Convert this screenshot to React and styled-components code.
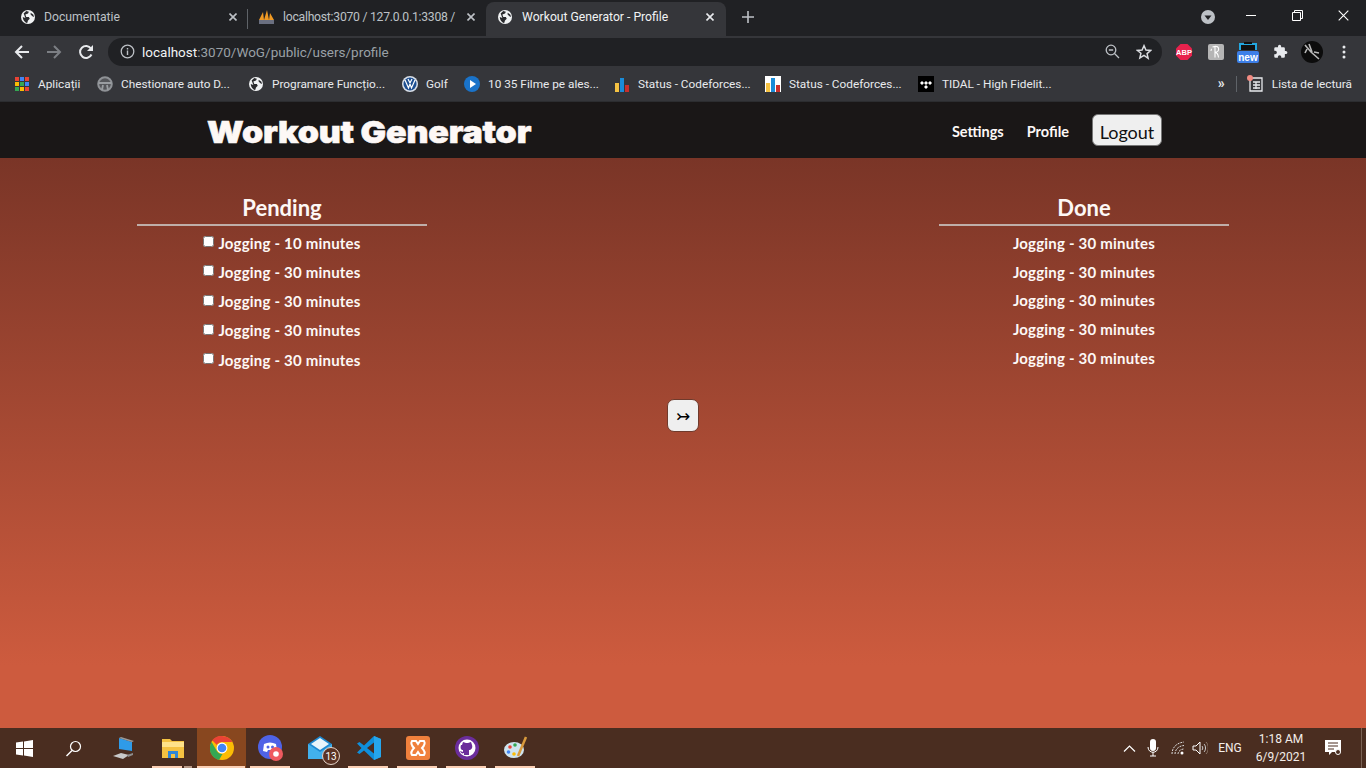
import React from "react";
import styled, { createGlobalStyle } from "styled-components";

const Global = createGlobalStyle`
  html, body { margin: 0; padding: 0; background: #fff; }
  #root { width: 1366px; height: 768px; overflow: hidden; }
  * { box-sizing: border-box; }
`;

const Screen = styled.div`
  width: 1366px; height: 768px; display: flex; flex-direction: column;
  font-family: Roboto, "Liberation Sans", sans-serif; overflow: hidden;
`;

/* ---------- browser chrome ---------- */
const TabStrip = styled.div`
  height: 36px; background: #202124; display: flex; align-items: flex-end; flex: none;
`;
const Tab = styled.div`
  width: ${p => p.$w}px; height: 34px; display: flex; align-items: center; position: relative;
  padding: 0 0 4px ${p => p.$pl}px; color: ${p => (p.$active ? "#f1f3f4" : "#bdc1c6")}; font-size: 12.2px;
  background: ${p => (p.$active ? "#35363a" : "transparent")};
  border-radius: ${p => (p.$active ? "8px 8px 0 0" : "0")};
  white-space: nowrap; overflow: hidden; flex: none;
`;
const TabTitle = styled.span`
  margin-left: ${p => p.$ml ?? 9}px; width: ${p => p.$w}px; flex: none;
  letter-spacing: ${p => p.$ls ?? 0}px;
`;
const TabClose = styled.span`
  display: flex; margin-left: auto; margin-right: ${p => p.$mr}px;
`;
const TabSep = styled.i`
  width: 1px; height: 20px; background: #5f6368; flex: none; margin-bottom: 7px;
`;
const NewTab = styled.span`
  display: flex; margin: 0 0 13px 16px;
`;
const WinArea = styled.div`
  margin-left: auto; display: flex; align-items: center; height: 36px;
`;
const ProfileDrop = styled.span`
  display: flex; margin-right: 13px; margin-bottom: 2px;
`;
const WinBtn = styled.span`
  width: 46px; height: 30px; display: flex; align-items: center; justify-content: center; margin-bottom: 6px;
`;

const Toolbar = styled.div`
  height: 31px; background: #35363a; display: flex; align-items: center; flex: none;
`;
const NavIcon = styled.span`
  width: 32px; display: flex; justify-content: center; flex: none;
`;
const NavIcons = styled.div`
  display: flex; padding-left: 6px; width: 108px; flex: none;
`;
const Omnibox = styled.div`
  width: 1054px; height: 28px; border-radius: 14px; background: #202124; display: flex; align-items: center;
  padding: 0 10px 0 12px; flex: none;
`;
const Url = styled.div`
  margin-left: 7px; font-size: 13.5px; color: #9aa0a6;
  b { font-weight: 400; color: #f1f3f4; }
`;
const OmniRight = styled.div`
  margin-left: auto; display: flex; gap: 16px; align-items: center;
`;
const Exts = styled.div`
  display: flex; align-items: center; margin-left: 6px;
`;
const Ext = styled.span`
  width: 32px; display: flex; justify-content: center; flex: none;
`;

const Bookmarks = styled.div`
  height: 35px; background: #35363a; display: flex; align-items: center; padding-left: 15px; flex: none;
  border-bottom: 1px solid #2c2d30;
`;
const Bm = styled.div`
  width: ${p => p.$w}px; flex: none; display: flex; align-items: center; gap: ${p => p.$gap ?? 8}px;
  color: #e8eaed; font-size: 11.8px; white-space: nowrap;
`;
const BmRight = styled.div`
  margin-left: auto; display: flex; align-items: center; padding-right: 14px;
  color: #e8eaed; font-size: 11.8px;
`;
const BmSep = styled.i`
  width: 1px; height: 16px; background: #5f6368; margin: 0 11px 0 11px;
`;
const ChevronText = styled.span`
  font-size: 14px; font-weight: 700; margin-top: -3px;
`;
const ReadIcon = styled.span`
  display: flex; margin-right: 9px; position: relative;
`;
const ReadDot = styled.i`
  position: absolute; left: -1px; top: -2px; width: 6px; height: 6px; border-radius: 50%; background: #f28b82;
`;

/* ---------- app ---------- */
const Nav = styled.nav`
  height: 56px; background: #1a1717; display: flex; align-items: center; padding: 0 204px 0 207px; flex: none;
  font-family: Lato, sans-serif;
`;
const Brand = styled.div`
  font-family: Inter, sans-serif; font-weight: 900; font-size: 30.5px; color: #fdf8f6; letter-spacing: -0.15px;
  -webkit-text-stroke: 0.6px #fdf8f6; transform: scaleX(1.113); transform-origin: left; margin-top: 2px;
`;
const NavLinks = styled.div`
  margin-left: auto; display: flex; align-items: center; gap: 23px;
`;
const NavLink = styled.a`
  color: #fdf8f6; font-size: 14.5px; font-weight: 700; padding-top: 2px;
`;
const LogoutBtn = styled.button`
  width: 70px; height: 32px; background: #efefef; border: 1px solid #767676; border-radius: 6px; color: #111;
  font-family: Lato, sans-serif; font-size: 18px; padding: 3px 0 0; margin-left: 0;
`;
const Main = styled.main`
  flex: 1; min-height: 0; display: flex; flex-direction: column; font-family: Lato, sans-serif; color: #fdf8f6;
  background: linear-gradient(180deg, #7a3527 0%, #cd5b3e 89%, #cd5b3e 100%);
  padding-top: 34px;
`;
const Columns = styled.div`
  display: flex; justify-content: space-between; padding: 0 137px;
`;
const Column = styled.section`
  width: 290px; text-align: center;
`;
const ColTitle = styled.h2`
  margin: 0; font-size: 22px; font-weight: 700; line-height: 31px; height: 32px;
`;
const Rule = styled.hr`
  margin: 0 0 ${p => p.$mb}px; border: 0; height: 2px; background: #bfaea9;
`;
const Row = styled.div`
  height: ${p => p.$h}px; display: flex; align-items: center; justify-content: center;
  font-size: 15px; font-weight: 700; letter-spacing: 0.2px;
`;
const Check = styled.input`
  width: 11px; height: 11px; margin: 0 4px 2px 0; flex: none;
`;
const ArrowRow = styled.div`
  display: flex; justify-content: center; margin-top: 24.8px;
`;
const ArrowBtn = styled.button`
  width: 32px; height: 33px; padding: 3px 0 0; background: #efefef; border: 1px solid #6f3a2c; border-radius: 7px; color: #000;
  font-family: "DejaVu Sans", sans-serif; font-size: 17px; line-height: 1;
`;

/* ---------- taskbar ---------- */
const Taskbar = styled.div`
  height: 40px; background: #4a2d20; display: flex; flex: none; align-items: stretch; color: #f4eeea;
  font-family: Roboto, sans-serif;
`;
const TaskItem = styled.div`
  width: ${p => p.$w || 49}px; flex: none; display: flex; align-items: center; justify-content: center; position: relative;
  background: ${p => (p.$active ? "#88471f" : "transparent")};
`;
const Underline = styled.i`
  position: absolute; bottom: 0; height: 2px; background: #fbcfb4;
  left: ${p => (p.$active ? 0 : 4)}px; right: ${p => (p.$active ? 1 : p.$stacked ? 15 : 5)}px;
`;
const UnderlineStack = styled.i`
  position: absolute; bottom: 0; height: 2px; background: #b89a88; left: 36px; right: 5px;
`;
const Badge = styled.span`
  position: absolute; right: 4px; bottom: 3px; width: 18px; height: 18px; border-radius: 50%; background: #5b3324;
  border: 1px solid #e6d5cc; font-size: 10px; display: flex; align-items: center; justify-content: center; color: #fff;
`;
const Tray = styled.div`
  margin-left: auto; display: flex; align-items: center; font-size: 12px; padding-right: 4px;
`;
const TrayIcon = styled.span`
  display: flex; width: ${p => p.$w}px; justify-content: center; flex: none;
`;
const Clock = styled.div`
  width: 58px; text-align: center; line-height: 18px; font-size: 12px; flex: none; margin-left: 4px;
`;
const Lang = styled.span`
  width: 36px; text-align: center; flex: none; margin-left: 2px;
`;
const Notif = styled.span`
  display: flex; width: 46px; justify-content: center; flex: none;
`;
const ShowDesktop = styled.i`
  width: 1px; height: 40px; background: #7a6254; margin-left: 5px; flex: none;
`;

/* ---------- icons ---------- */
const Globe = ({ s = 14 }) => (
  <svg width={s} height={s} viewBox="0 0 16 16">
    <circle cx="8" cy="8" r="8" fill="#f1f3f4" />
    <path d="M6 1l3 1-1 2-3 1 1 3 3 0 1 2-2 2-1 3C4 14 2 11 2 8l3 1L3 4z M11 3l3 2 1 3-2-1-2-2z" fill="#2a2b2e" />
  </svg>
);
const X = ({ c = "#bdc1c6", s = 8, w = 1.6 }) => (
  <svg width={s} height={s} viewBox="0 0 8 8"><path d="M.5.5l7 7M7.5.5l-7 7" stroke={c} strokeWidth={w} fill="none" /></svg>
);
const Pma = () => (
  <svg width="17" height="16" viewBox="0 0 17 16">
    <path d="M1 11L5 3l1 8zM6 11l3-10 2 10zM11 11l1-7 4 7z" fill="#f09a24" />
    <rect x="1" y="11" width="15" height="4" fill="#6a6f80" />
  </svg>
);
const Back = ({ c = "#e8eaed" }) => (
  <svg width="16" height="16" viewBox="0 0 16 16"><path d="M15 8H2M8 2L2 8l6 6" stroke={c} strokeWidth="2" fill="none" /></svg>
);
const Fwd = () => (
  <svg width="16" height="16" viewBox="0 0 16 16"><path d="M1 8h13M8 2l6 6-6 6" stroke="#7c7f84" strokeWidth="2" fill="none" /></svg>
);
const Reload = () => (
  <svg width="16" height="16" viewBox="0 0 16 16"><path d="M13.5 10.5A6 6 0 1 1 13 4.5" stroke="#e8eaed" strokeWidth="2" fill="none" /><path d="M15 1v6H9z" fill="#e8eaed" /></svg>
);
const Info = () => (
  <svg width="15" height="15" viewBox="0 0 15 15"><circle cx="7.5" cy="7.5" r="6.3" stroke="#bdc1c6" strokeWidth="1.3" fill="none" /><path d="M7.5 6.5v4.5M7.5 4v1.4" stroke="#bdc1c6" strokeWidth="1.4" /></svg>
);
const Zoom = () => (
  <svg width="15" height="15" viewBox="0 0 15 15"><circle cx="6" cy="6" r="4.8" stroke="#bdc1c6" strokeWidth="1.3" fill="none" /><path d="M9.5 9.5L14 14M3.8 6h4.4" stroke="#bdc1c6" strokeWidth="1.3" /></svg>
);
const Star = () => (
  <svg width="16" height="16" viewBox="0 0 24 24"><path d="M12 2.5l2.9 6.5 7 .7-5.300 4.700 1.600 7L12 17.200 5.800 20.900l1.600-7L2.100 9.700l7-.7z" stroke="#dadce0" strokeWidth="2.200" fill="none" /></svg>
);
const Abp = () => (
  <svg width="18" height="18" viewBox="0 0 18 18"><path d="M5.500 1h7L17 5.500v7L12.500 17h-7L1 12.500v-7z" fill="#e8224d" /><text x="9" y="12" textAnchor="middle" fontSize="7.500" fontWeight="700" fontFamily="Liberation Sans" fill="#fff">ABP</text></svg>
);
const Kext = () => (
  <svg width="16" height="16" viewBox="0 0 16 16"><rect width="16" height="16" rx="2" fill="#b5b5b5" /><path d="M7 2.500v11M7 8.500c3-.5 4-2 3.500-4.500-.5-1.500-3-2-6-1M7 8.500c2 0 3 1 3.500 5M4 5c-1 0-1 1-1 2" stroke="#fff" strokeWidth="1.100" fill="none" /></svg>
);
const NewExt = () => (
  <svg width="22" height="22" viewBox="0 0 22 22"><path d="M3 9V3h16v6" stroke="#22a7e0" strokeWidth="2" fill="#111" /><rect x="7" y="1" width="8" height="2" fill="#111" /><rect y="10" width="22" height="12" rx="2" fill="#3d7fe8" /><text x="11" y="20" textAnchor="middle" fontSize="10" fontWeight="700" fontFamily="Liberation Sans" fill="#fff">new</text></svg>
);
const Puzzle = () => (
  <svg width="15" height="15" viewBox="0 0 24 24"><path fill="#e8eaed" d="M20.500 11H19V7a2 2 0 0 0-2-2h-4V3.500a2.500 2.500 0 0 0-5 0V5H4a2 2 0 0 0-2 2v3.800h1.500a2.700 2.700 0 0 1 0 5.400H2V20a2 2 0 0 0 2 2h3.800v-1.500a2.700 2.700 0 0 1 5.400 0V22H17a2 2 0 0 0 2-2v-4h1.500a2.500 2.500 0 0 0 0-5z" /></svg>
);
const Avatar = () => (
  <svg width="22" height="22" viewBox="0 0 22 22"><circle cx="11" cy="11" r="11" fill="#0c0c0c" /><path d="M4 4l6 7 8 7M8 3l3 8M13 11l5 1M6 8l-2 4" stroke="#b9b9b9" strokeWidth="1.600" fill="none" /></svg>
);
const Dots = () => (
  <svg width="4" height="14" viewBox="0 0 4 14"><circle cx="2" cy="2" r="1.500" fill="#e8eaed" /><circle cx="2" cy="7" r="1.500" fill="#e8eaed" /><circle cx="2" cy="12" r="1.500" fill="#e8eaed" /></svg>
);
const Apps = () => {
  const colors = ["#ea4335", "#4285f4", "#ea4335", "#fbbc05", "#34a853", "#4285f4", "#34a853", "#fbbc05", "#ea4335"];
  return (
    <svg width="14" height="14" viewBox="0 0 14 14">
      {colors.map((c, i) => <rect key={i} x={(i % 3) * 5} y={Math.floor(i / 3) * 5} width="4" height="4" fill={c} />)}
    </svg>
  );
};
const Wheel = () => (
  <svg width="16" height="16" viewBox="0 0 16 16"><circle cx="8" cy="8" r="6.800" stroke="#8f9296" strokeWidth="2" fill="#55565a" /><path d="M1.500 7h13M6 9l-1 5M10 9l1 5" stroke="#9a9da1" strokeWidth="1.800" /></svg>
);
const Vw = () => (
  <svg width="16" height="16" viewBox="0 0 16 16"><circle cx="8" cy="8" r="8" fill="#d9dfe8" /><circle cx="8" cy="8" r="6.500" fill="#1d4f91" /><path d="M3 4l3.500 8L8 8l1.500 4L13 4M6 3l2 4 2-4" stroke="#fff" strokeWidth="1.200" fill="none" /></svg>
);
const Play = () => (
  <svg width="16" height="16" viewBox="0 0 16 16"><circle cx="8" cy="8" r="8" fill="#1a73c9" /><path d="M6 4l6 4-6 4z" fill="#fff" /></svg>
);
const Bars = ({ bg }) => (
  <svg width="16" height="16" viewBox="0 0 16 16">{bg && <rect width="16" height="16" fill="#fff" />}<rect x="1" y="7" width="4" height="9" fill="#f5c242" /><rect x="6" y="2" width="4" height="14" fill="#1a8cd8" /><rect x="11" y="9" width="4" height="7" fill="#c9302c" /></svg>
);
const Tidal = () => (
  <svg width="16" height="16" viewBox="0 0 16 16"><rect width="16" height="16" fill="#000" /><path d="M8 5l2 2-2 2-2-2zM4 5l2 2-2 2-2-2zM12 5l2 2-2 2-2-2zM8 9l2 2-2 2-2-2z" fill="#fff" /></svg>
);
const ReadList = () => (
  <svg width="15" height="15" viewBox="0 0 15 15"><path d="M2 1h12v13H2zM5 5h7M5 8h7M5 11h7M8 5v7" stroke="#e8eaed" strokeWidth="1.300" fill="none" /></svg>
);
const WinLogo = () => (
  <svg width="17" height="17" viewBox="0 0 17 17"><path d="M0 2.500L7 1.500v6.500H0zM8 1.400L17 0v8H8zM0 9h7v6.500L0 14.500zM8 9h9v8l-9-1.400z" fill="#fff" /></svg>
);
const Search = () => (
  <svg width="17" height="17" viewBox="0 0 17 17"><circle cx="10.500" cy="6.500" r="5" stroke="#fff" strokeWidth="1.200" fill="none" /><path d="M7 10.500L1.500 16" stroke="#fff" strokeWidth="1.400" /></svg>
);
const Laptop = () => (
  <svg width="24" height="24" viewBox="0 0 24 24"><path d="M7 2l13 4v9l-13-2z" fill="#2f9be8" /><path d="M7 2l2-1 13 4-2 1z" fill="#9a9a9a" /><path d="M1 20l8-3 8 2-6 4z" fill="#c9c9c9" /><path d="M15 19l6-2v2l-5 2z" fill="#8d8d8d" /></svg>
);
const Folder = () => (
  <svg width="22" height="20" viewBox="0 0 22 20"><path d="M0 1h8l2 2h12v17H0z" fill="#f5c242" /><rect y="4" width="22" height="5" fill="#ffe28a" /><path d="M6 20v-7h10v7h-3v-4H9v4z" fill="#2f86d6" /></svg>
);
const Chrome = () => (
  <svg width="24" height="24" viewBox="0 0 24 24">
    <circle cx="12" cy="12" r="12" fill="#fbbc05" />
    <path d="M12 0a12 12 0 0 1 10.400 6H12a6 6 0 0 0-5.200 3L2.200 4.200A12 12 0 0 1 12 0z" fill="#ea4335" />
    <path d="M1.600 6L6.800 15a6 6 0 0 0 5.700 3L9 24A12 12 0 0 1 1.600 6z" fill="#34a853" />
    <circle cx="12" cy="12" r="5.400" fill="#fff" /><circle cx="12" cy="12" r="4.300" fill="#4285f4" />
  </svg>
);
const Discord = () => (
  <svg width="26" height="26" viewBox="0 0 26 26"><circle cx="12" cy="12" r="12" fill="#4f63e6" /><path d="M6 9c4-2 8-2 12 0l1 7-4 1-1-2h-4l-1 2-4-1z" fill="#fff" /><circle cx="10" cy="12" r="1.500" fill="#4f63e6" /><circle cx="14.500" cy="12" r="1.500" fill="#4f63e6" /><circle cx="18" cy="19" r="7" fill="#ef5a5f" /><circle cx="18" cy="19" r="2.800" fill="#fff" /></svg>
);
const Mail = () => (
  <svg width="24" height="24" viewBox="0 0 24 24"><path d="M0 8l12-8 12 8v15H0z" fill="#1e88d0" /><path d="M3 8l9-6 9 6-9 6z" fill="#e9f5fb" /><path d="M0 8l12 8 12-8v15H0z" fill="#42b0ec" /></svg>
);
const VsCode = () => (
  <svg width="24" height="24" viewBox="0 0 24 24"><path d="M17 0l7 3v18l-7 3L7 14.500 2.500 18 0 16.500 4.500 12 0 7.500 2.500 6 7 9.500z" fill="#0f8fdb" /><path d="M17 6.500L10 12l7 5.500z" fill="#4a2d20" /><path d="M17 0l7 3v18l-7 3z" fill="#26a6ec" /></svg>
);
const Xampp = () => (
  <svg width="24" height="24" viewBox="0 0 24 24"><rect width="24" height="24" rx="3" fill="#f0803c" /><path d="M6 5h4l2 3 2-3h4c2 3 0 5-2 7 2 2 4 4 2 7h-4l-2-3-2 3H6c-2-3 0-5 2-7-2-2-4-4-2-7z" stroke="#fff" strokeWidth="2" fill="none" /></svg>
);
const Github = () => (
  <svg width="24" height="24" viewBox="0 0 24 24"><circle cx="12" cy="12" r="12" fill="#6b2d9b" /><circle cx="12" cy="12" r="8.500" fill="#fff" /><path d="M7 9l1-3 3 1h2l3-1 1 3c1 3-1 5-3 5v5h-5v-2c-2 1-3 0-4-2 1 0 2 1 3 1v-2c-2 0-3-2-2-5z" fill="#6b2d9b" /></svg>
);
const Palette = () => (
  <svg width="24" height="24" viewBox="0 0 24 24"><ellipse cx="10" cy="14" rx="10" ry="8" fill="#cfe4ef" /><circle cx="6" cy="11" r="1.800" fill="#ea4335" /><circle cx="11" cy="9" r="1.800" fill="#34a853" /><circle cx="4.500" cy="16" r="1.800" fill="#4285f4" /><circle cx="10" cy="18" r="1.800" fill="#fbbc05" /><path d="M14 20L22 1" stroke="#d99a3c" strokeWidth="2.500" /></svg>
);
const Caret = () => (
  <svg width="13" height="7" viewBox="0 0 13 7"><path d="M1 6.500l5.500-5.500 5.500 5.500" stroke="#fff" strokeWidth="1.200" fill="none" /></svg>
);
const Mic = () => (
  <svg width="12" height="18" viewBox="0 0 12 18"><rect x="3" y="0" width="6" height="12" rx="3" fill="#fff" /><path d="M1 8c0 7 10 7 10 0M6 13v4M3 17h6" stroke="#fff" strokeWidth="1" fill="none" /></svg>
);
const Wifi = () => (
  <svg width="15" height="14" viewBox="0 0 15 14"><path d="M1 13c0-6 4-11 12-12M4 13c0-4 3-8 9-8.500M7 13c0-2 2-5 6-5" stroke="#ddd" strokeWidth="1" strokeDasharray="2 1" fill="none" /><circle cx="11" cy="12" r="1.500" fill="#fff" /></svg>
);
const Speaker = () => (
  <svg width="16" height="14" viewBox="0 0 16 14"><path d="M1 5h3l4-4v12l-4-4H1z" stroke="#fff" fill="none" /><path d="M10 5c1 1 1 3 0 4M12 3c2 2 2 6 0 8" stroke="#ccc" fill="none" /><path d="M14 1c3 3 3 9 0 12" stroke="#8a7568" fill="none" /></svg>
);
const Chat = () => (
  <svg width="17" height="16" viewBox="0 0 17 16"><path d="M0 0h16v12H7l-3 3v-3H0z" fill="#fff" /><path d="M3 3h10M3 6h10M3 9h6" stroke="#4a2d20" /><circle cx="13" cy="12" r="2.500" fill="#4a2d20" stroke="#fff" /></svg>
);

const pending = ["Jogging - 10 minutes", ...Array(4).fill("Jogging - 30 minutes")];
const done = Array(5).fill("Jogging - 30 minutes");

export default function App() {
  return (
    <Screen>
      <Global />
      <TabStrip>
        <Tab $w={247} $pl={21}><Globe /><TabTitle $w={180}>Documentatie</TabTitle><TabClose $mr={10}><X /></TabClose></Tab>
        <TabSep />
        <Tab $w={238} $pl={10}>
          <Pma />
          <TabTitle $w={176} $ml={8} $ls={-0.25}>localhost:3070 / 127.0.0.1:3308 /</TabTitle>
          <TabClose $mr={11}><X /></TabClose>
        </Tab>
        <Tab $w={240} $active $pl={12}><Globe /><TabTitle $w={170} $ml={10}>Workout Generator - Profile</TabTitle><TabClose $mr={12}><X c="#e8eaed" /></TabClose></Tab>
        <NewTab><svg width="12" height="12" viewBox="0 0 12 12"><path d="M6 0v12M0 6h12" stroke="#bdc1c6" strokeWidth="1.600" /></svg></NewTab>
        <WinArea>
          <ProfileDrop>
            <svg width="14" height="14" viewBox="0 0 14 14"><circle cx="7" cy="7" r="7" fill="#bdc1c6" /><path d="M3.500 5.500h7L7 10z" fill="#202124" /></svg>
          </ProfileDrop>
          <WinBtn><svg width="10" height="1" viewBox="0 0 10 1"><rect width="10" height="1" fill="#fff" /></svg></WinBtn>
          <WinBtn><svg width="11" height="11" viewBox="0 0 11 11"><path d="M.5 2.500h8v8h-8zM2.500 2.500v-2h8v8h-2" stroke="#fff" fill="none" /></svg></WinBtn>
          <WinBtn><X c="#fff" s={11} w={0.8} /></WinBtn>
        </WinArea>
      </TabStrip>

      <Toolbar>
        <NavIcons>
          <NavIcon><Back /></NavIcon>
          <NavIcon><Fwd /></NavIcon>
          <NavIcon><Reload /></NavIcon>
        </NavIcons>
        <Omnibox>
          <Info />
          <Url><b>localhost</b>:3070/WoG/public/users/profile</Url>
          <OmniRight><Zoom /><Star /></OmniRight>
        </Omnibox>
        <Exts>
          <Ext><Abp /></Ext>
          <Ext><Kext /></Ext>
          <Ext><NewExt /></Ext>
          <Ext><Puzzle /></Ext>
          <Ext><Avatar /></Ext>
          <Ext><Dots /></Ext>
        </Exts>
      </Toolbar>

      <Bookmarks>
        <Bm $w={82} $gap={9}><Apps />Aplicații</Bm>
        <Bm $w={152}><Wheel />Chestionare auto D...</Bm>
        <Bm $w={153} $gap={9}><Globe />Programare Funcțio...</Bm>
        <Bm $w={62}><Vw />Golf</Bm>
        <Bm $w={150}><Play />10 35 Filme pe ales...</Bm>
        <Bm $w={151}><Bars />Status - Codeforces...</Bm>
        <Bm $w={153}><Bars bg />Status - Codeforces...</Bm>
        <Bm $w={150}><Tidal />TIDAL - High Fidelit...</Bm>
        <BmRight>
          <ChevronText>»</ChevronText>
          <BmSep />
          <ReadIcon><ReadDot /><ReadList /></ReadIcon>
          Lista de lectură
        </BmRight>
      </Bookmarks>

      <Nav>
        <Brand>Workout Generator</Brand>
        <NavLinks>
          <NavLink>Settings</NavLink>
          <NavLink>Profile</NavLink>
          <LogoutBtn>Logout</LogoutBtn>
        </NavLinks>
      </Nav>

      <Main>
        <Columns>
          <Column>
            <ColTitle>Pending</ColTitle>
            <Rule $mb={2.2} />
            {pending.map((t, i) => (
              <Row key={i} $h={29.2}><Check type="checkbox" />{t}</Row>
            ))}
          </Column>
          <Column>
            <ColTitle>Done</ColTitle>
            <Rule $mb={2.425} />
            {done.map((t, i) => (
              <Row key={i} $h={28.75}>{t}</Row>
            ))}
          </Column>
        </Columns>
        <ArrowRow><ArrowBtn>↣</ArrowBtn></ArrowRow>
      </Main>

      <Taskbar>
        <TaskItem $w={48}><WinLogo /></TaskItem>
        <TaskItem $w={51}><Search /></TaskItem>
        <TaskItem><Laptop /></TaskItem>
        <TaskItem><Folder /><Underline $stacked /><UnderlineStack /></TaskItem>
        <TaskItem $active><Chrome /><Underline $active /></TaskItem>
        <TaskItem><Discord /><Underline /></TaskItem>
        <TaskItem><Mail /><Badge>13</Badge></TaskItem>
        <TaskItem><VsCode /><Underline /></TaskItem>
        <TaskItem><Xampp /><Underline /></TaskItem>
        <TaskItem><Github /><Underline /></TaskItem>
        <TaskItem><Palette /><Underline /></TaskItem>
        <Tray>
          <TrayIcon $w={22}><Caret /></TrayIcon>
          <TrayIcon $w={26}><Mic /></TrayIcon>
          <TrayIcon $w={24}><Wifi /></TrayIcon>
          <TrayIcon $w={20}><Speaker /></TrayIcon>
          <Lang>ENG</Lang>
          <Clock>1:18 AM<br />6/9/2021</Clock>
          <Notif><Chat /></Notif>
          <ShowDesktop />
        </Tray>
      </Taskbar>
    </Screen>
  );
}
